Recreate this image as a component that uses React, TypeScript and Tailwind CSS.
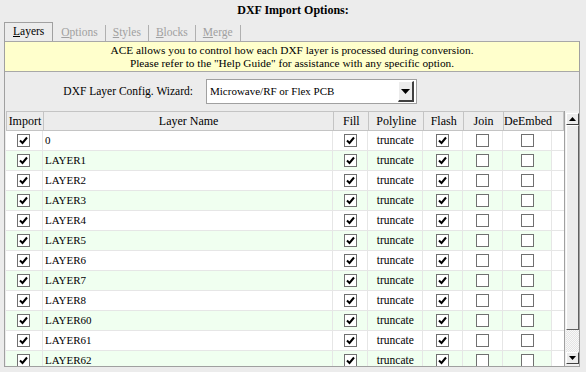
import React from 'react';

const layers = ['0', 'LAYER1', 'LAYER2', 'LAYER3', 'LAYER4', 'LAYER5', 'LAYER6', 'LAYER7', 'LAYER8', 'LAYER60', 'LAYER61', 'LAYER62'];

const Check = ({ on }: { on: boolean }) => (
  <div className="w-[13px] h-[13px] border border-[#707070] bg-white flex items-center justify-center">
    {on && (
      <svg width="9" height="9" viewBox="0 0 9 9">
        <path d="M1 4.5 L3.5 7 L8 1.5" fill="none" stroke="#000" strokeWidth="2" />
      </svg>
    )}
  </div>
);

const cols = [
  { name: 'Import', w: 'w-[37px]' },
  { name: 'Layer Name', w: 'w-[291px]' },
  { name: 'Fill', w: 'w-[35px]' },
  { name: 'Polyline', w: 'w-[55px]' },
  { name: 'Flash', w: 'w-[40px]' },
  { name: 'Join', w: 'w-[40px]' },
  { name: 'DeEmbed', w: 'w-[49px]' },
];

const Tab = ({ label, active }: { label: string; active?: boolean }) =>
  active ? (
    <div className="h-[19px] px-[8px] border-t border-l border-r border-[#a0a0a0] bg-[#ececec] text-black flex items-center">
      <span className="underline">{label[0]}</span>
      {label.slice(1)}
    </div>
  ) : (
    <div className="h-[16px] px-[7px] border-r border-[#b0b0b0] text-[#a0a0a0] flex items-center">
      <span className="underline">{label[0]}</span>
      {label.slice(1)}
    </div>
  );

export default function App() {
  return (
    <div className="w-[586px] h-[372px] bg-[#ececec] overflow-hidden font-['Liberation_Serif',serif] text-black">
      <div className="h-[23px] pt-[2px] text-center text-[12px] font-bold leading-[16px]">DXF Import Options:</div>
      <div className="h-[18px] pl-[4px] flex items-end text-[11.5px]">
        <Tab label="Layers" active />
        <div className="w-[1px]" />
        <Tab label="Options" />
        <Tab label="Styles" />
        <Tab label="Blocks" />
        <Tab label="Merge" />
      </div>
      <div className="ml-[4px] w-[576px] h-[326px] border-l border-r border-b border-[#a0a0a0] flex flex-col">
        <div className="h-[31px] bg-[#ffffcc] border-t border-b border-[#a8a8a8] text-[11.3px] leading-[13px] text-center pt-[2px]">
          <div>ACE allows you to control how each DXF layer is processed during conversion.</div>
          <div>Please refer to the "Help Guide" for assistance with any specific option.</div>
        </div>
        <div className="h-[39px] flex items-center text-[11.5px]">
          <div className="w-[188px] text-right">DXF Layer Config. Wizard:</div>
          <div className="ml-[13px] w-[211px] h-[25px] border border-[#a0a0a0] bg-white flex items-center justify-between pl-[3px] pr-[2px] text-[11px]">
            <span>Microwave/RF or Flex PCB</span>
            <div className="w-[16px] h-[21px] bg-[#ececec] border-t border-l border-t-white border-l-white border-r-2 border-b-2 border-r-[#404040] border-b-[#404040] flex items-center justify-center">
              <svg width="9" height="5" viewBox="0 0 9 5"><path d="M0 0 H9 L4.5 5 Z" fill="#000" /></svg>
            </div>
          </div>
        </div>
        <div className="flex flex-1 min-h-0 pl-[1px]">
          <div className="w-[559px] flex flex-col overflow-hidden">
            <div className="h-[20px] flex text-[12px] shrink-0">
              {cols.map((c) => (
                <div key={c.name} className={`${c.w} h-[20px] border border-r-0 last:border-r border-[#c4c4c4] flex items-center justify-center`}>
                  {c.name}
                </div>
              ))}
              <div className="w-[12px] h-[20px] border border-l-0 border-[#c4c4c4]" />
            </div>
            {layers.map((name, i) => (
              <div key={name} className={`h-[20px] shrink-0 flex text-[11px] border-b border-[#e6e6e6] ${i % 2 ? 'bg-[#f0fff0]' : 'bg-white'}`}>
                <div className="w-[37px] border-r border-[#e6e6e6] flex items-center justify-center"><Check on /></div>
                <div className="w-[291px] border-r border-[#e6e6e6] flex items-center pl-[2px]">{name}</div>
                <div className="w-[35px] border-r border-[#e6e6e6] flex items-center justify-center"><Check on /></div>
                <div className="w-[55px] border-r border-[#e6e6e6] flex items-center justify-center text-[11.5px]">truncate</div>
                <div className="w-[40px] border-r border-[#e6e6e6] flex items-center justify-center"><Check on /></div>
                <div className="w-[40px] border-r border-[#e6e6e6] flex items-center justify-center"><Check on={false} /></div>
                <div className="w-[49px] border-r border-[#e6e6e6] flex items-center justify-center"><Check on={false} /></div>
                <div className="w-[12px] bg-white" />
              </div>
            ))}
          </div>
          <div className="w-[15px] border-l border-[#a0a0a0] bg-[#f0f0f0] flex flex-col pt-[2px] pb-[2px] pl-[1px]">
            <div className="w-[13px] h-[12px] bg-[#ececec] border border-t-white border-l-white border-r-[#404040] border-b-[#404040] flex items-center justify-center">
              <svg width="7" height="4" viewBox="0 0 7 4"><path d="M0 4 H7 L3.5 0 Z" fill="#000" /></svg>
            </div>
            <div className="w-[13px] h-[205px] bg-[#ececec] border border-t-white border-l-white border-r-[#606060] border-b-[#606060]" />
            <div className="w-[13px] flex-1 bg-[repeating-conic-gradient(#e4e4e4_0_25%,#f8f8f8_0_50%)] bg-[length:2px_2px]" />
            <div className="w-[13px] h-[12px] bg-[#ececec] border border-t-white border-l-white border-r-[#404040] border-b-[#404040] flex items-center justify-center">
              <svg width="7" height="4" viewBox="0 0 7 4"><path d="M0 0 H7 L3.5 4 Z" fill="#000" /></svg>
            </div>
          </div>
        </div>
      </div>
    </div>
  );
}
